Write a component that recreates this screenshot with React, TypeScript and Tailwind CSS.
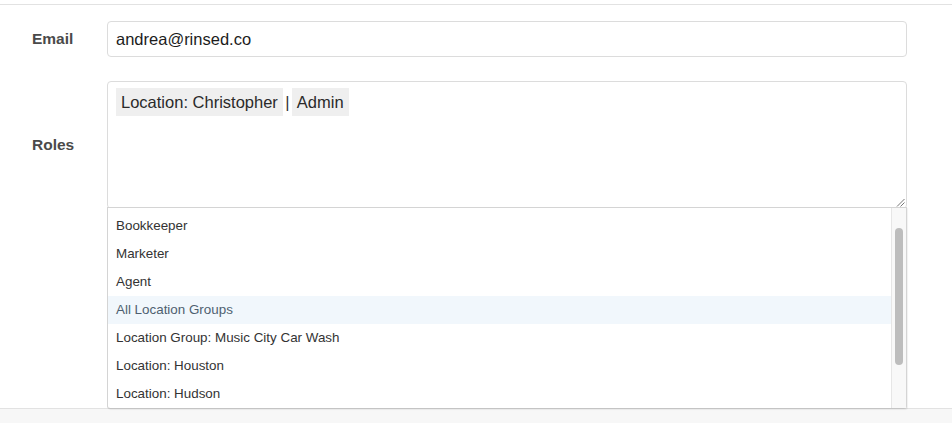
import React from "react";

const items = [
  "Bookkeeper",
  "Marketer",
  "Agent",
  "All Location Groups",
  "Location Group: Music City Car Wash",
  "Location: Houston",
  "Location: Hudson",
];

export default function App() {
  return (
    <div
      className="w-[952px] h-[423px] overflow-hidden bg-white flex flex-col"
      style={{ fontFamily: '"Liberation Sans", Arial, sans-serif' }}
    >
      <div className="h-[4px] shrink-0" />
      <div className="h-[404px] shrink-0 border-t border-[#e2e2e2] pt-[16px] pl-[32px] pr-[45px] flex flex-col gap-[24px]">
        <div className="flex items-center">
          <div className="w-[75px] text-[15.5px] font-bold text-[#4a4a4a]">Email</div>
          <div className="flex-1 h-[36px] border border-[#dcdcdc] rounded-[4px] flex items-center pl-[8px] text-[16.5px] text-[#1c1c1c]">
            andrea@rinsed.co
          </div>
        </div>
        <div className="flex items-center">
          <div className="w-[75px] text-[15.5px] font-bold text-[#4a4a4a]">Roles</div>
          <div className="flex-1 relative">
            <div className="h-[128px] border border-[#dcdcdc] rounded-[4px] pt-[6px] pl-[8px] relative">
              <div className="flex items-center text-[16.5px] text-[#2a2a2a]">
                <span className="h-[28px] bg-[#efefef] px-[5px] flex items-center">Location: Christopher</span>
                <span className="w-[9px] flex justify-center text-[#333]">|</span>
                <span className="h-[28px] bg-[#efefef] px-[5px] flex items-center">Admin</span>
              </div>
              <svg className="absolute right-[1px] bottom-[1px]" width="9" height="9" viewBox="0 0 9 9">
                <line x1="1" y1="8.5" x2="8.5" y2="1" stroke="#777" strokeWidth="1" />
                <line x1="4.5" y1="8.5" x2="8.5" y2="4.5" stroke="#777" strokeWidth="1" />
              </svg>
            </div>
            <div className="absolute left-0 top-[126px] w-[800px] h-[202px] bg-white border border-[#d4d4d4] border-b-[#c4c4c4] rounded-b-[3px] shadow-[1px_1px_1px_rgba(0,0,0,0.06)] flex">
              <div className="flex-1 pt-[4px] flex flex-col">
                {items.map((t, i) => (
                  <div
                    key={t}
                    className={
                      "h-[28px] shrink-0 flex items-center pl-[8px] pt-[1px] text-[13.4px] " +
                      (i === 3 ? "bg-[#f1f7fc] text-[#4e5f70]" : "text-[#333333]")
                    }
                  >
                    {t}
                  </div>
                ))}
              </div>
              <div className="w-[15px] bg-[#f8f8f8] border-l border-[#e6e6e6] pt-[20px] pl-[3px]">
                <div className="w-[8px] h-[137px] rounded-full bg-[#bdbdbd]" />
              </div>
            </div>
          </div>
        </div>
      </div>
      <div className="flex-1 bg-[#f7f7f7] border-t border-[#e2e2e2]" />
    </div>
  );
}
